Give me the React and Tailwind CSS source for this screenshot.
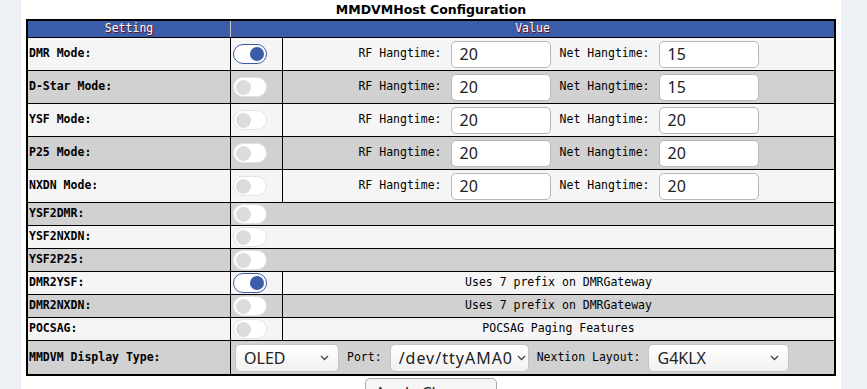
import React from "react";

const mono = "font-['DejaVu_Sans_Mono','Liberation_Mono',monospace]";
const sans = "font-['Noto_Sans','Open_Sans',sans-serif]";

const rows = [
  { label: "DMR Mode:", on: true, kind: "hang", rf: "20", net: "15" },
  { label: "D-Star Mode:", on: false, kind: "hang", rf: "20", net: "15" },
  { label: "YSF Mode:", on: false, kind: "hang", rf: "20", net: "20" },
  { label: "P25 Mode:", on: false, kind: "hang", rf: "20", net: "20" },
  { label: "NXDN Mode:", on: false, kind: "hang", rf: "20", net: "20" },
  { label: "YSF2DMR:", on: false, kind: "none" },
  { label: "YSF2NXDN:", on: false, kind: "none" },
  { label: "YSF2P25:", on: false, kind: "none" },
  { label: "DMR2YSF:", on: true, kind: "text", text: "Uses 7 prefix on DMRGateway" },
  { label: "DMR2NXDN:", on: false, kind: "text", text: "Uses 7 prefix on DMRGateway" },
  { label: "POCSAG:", on: false, kind: "text", text: "POCSAG Paging Features" },
];

function Toggle({ on }) {
  return (
    <div
      className={
        on
          ? "flex h-[20px] w-[34px] items-center justify-end rounded-full border-[1.5px] border-[#3b5ca8] bg-white px-[2px]"
          : "flex h-[20px] w-[34px] items-center justify-start rounded-full border border-[#e2e2e2] bg-white px-[2px]"
      }
    >
      <div
        className={
          on
            ? "h-[14px] w-[14px] rounded-full bg-[#3b5ca8]"
            : "h-[15px] w-[15px] rounded-full bg-[#dcdcdc]"
        }
      />
    </div>
  );
}

function Input({ value }) {
  return (
    <div
      className={`flex h-[27px] w-[100px] items-center rounded-[5px] border border-[#b8b8b8] bg-white pl-[8px] text-[16px] text-[#222] ${sans}`}
    >
      {value}
    </div>
  );
}

function Chevron() {
  return (
    <svg width="9" height="6" viewBox="0 0 9 6" className="shrink-0">
      <polyline points="1,1 4.5,4.5 8,1" fill="none" stroke="#444" strokeWidth="1.3" />
    </svg>
  );
}

function Select({ value, w, tight }) {
  return (
    <div
      className={`flex h-[28px] items-center rounded-[5px] border border-[#c4c4c4] bg-gradient-to-b from-white to-[#f1f1f1] pl-[8px] text-[16px] text-[#222] ${sans} ${
        tight ? "gap-[4px] pr-[3px]" : "justify-between pr-[9px]"
      }`}
      style={{ width: w }}
    >
      <span className={tight ? "tracking-[1px]" : ""}>{value}</span>
      <Chevron />
    </div>
  );
}

export default function App() {
  return (
    <div className="min-h-screen bg-[#edf0f5]">
      <div className="ml-[21px] min-h-screen w-[820px] bg-white px-[5px]">
        <div className="flex h-[19px] items-center justify-center pt-[1px] font-['DejaVu_Sans',sans-serif] text-[12.5px] font-bold text-black">
          MMDVMHost Configuration
        </div>
        <div className={`w-[810px] border-2 border-black text-[11.5px] ${mono}`}>
          <div className="flex h-[16px] bg-[#3b5ca8] text-white [text-shadow:1px_1px_#6b0a0a]">
            <div className="flex w-[203px] items-center justify-center border-r border-[#c8c8c8]">
              Setting
            </div>
            <div className="flex flex-1 items-center justify-center">Value</div>
          </div>
          {rows.map((r, i) => {
            const bg = i % 2 === 0 ? "bg-[#f5f5f5]" : "bg-[#d1d1d1]";
            const h = r.kind === "hang" ? "h-[33px]" : "h-[23px]";
            return (
              <div key={r.label} className={`flex border-t border-black ${h} ${bg}`}>
                <div className="flex w-[203px] items-center border-r border-black pl-[1px] font-bold text-black">
                  {r.label}
                </div>
                {r.kind === "none" ? (
                  <div className="flex flex-1 items-center pl-[2px]">
                    <Toggle on={r.on} />
                  </div>
                ) : (
                  <>
                    <div className="flex w-[52px] items-center border-r border-black pl-[2px]">
                      <Toggle on={r.on} />
                    </div>
                    <div className="flex flex-1 items-center justify-center gap-[9px] text-black">
                      {r.kind === "hang" ? (
                        <>
                          <span>RF Hangtime:</span>
                          <Input value={r.rf} />
                          <span>Net Hangtime:</span>
                          <Input value={r.net} />
                        </>
                      ) : (
                        <span>{r.text}</span>
                      )}
                    </div>
                  </>
                )}
              </div>
            );
          })}
          <div className="flex h-[34px] border-t border-black bg-[#d1d1d1]">
            <div className="flex w-[203px] items-center border-r border-black pl-[1px] font-bold text-black">
              MMDVM Display Type:
            </div>
            <div className="flex flex-1 items-center gap-[8px] pl-[4px] text-black">
              <Select value="OLED" w="104px" />
              <span>Port:</span>
              <Select value="/dev/ttyAMA0" w="139px" tight />
              <span>Nextion Layout:</span>
              <Select value="G4KLX" w="141px" />
            </div>
          </div>
        </div>
        <div className="mt-[2px] flex justify-center">
          <div
            className={`flex h-[30px] w-[132px] items-center justify-center rounded-[5px] border border-[#a8a8a8] bg-[#f6f6f6] text-[16px] text-[#222] ${sans}`}
          >
            Apply Changes
          </div>
        </div>
      </div>
    </div>
  );
}
